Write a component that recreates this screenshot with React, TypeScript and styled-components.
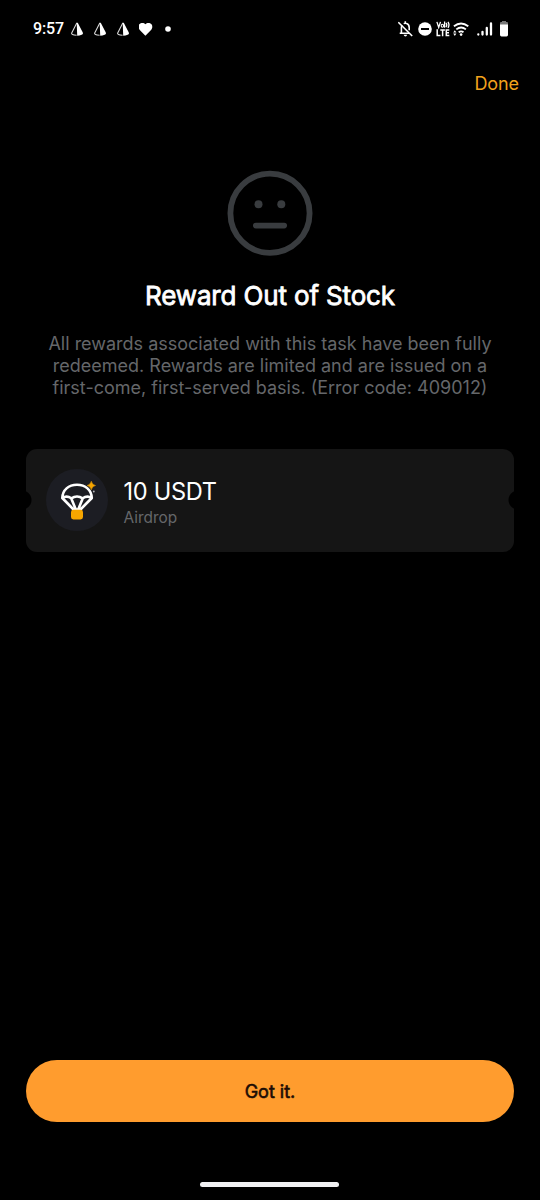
import React from "react";
import styled, { createGlobalStyle } from "styled-components";

const GlobalStyle = createGlobalStyle`
  *, *::before, *::after { box-sizing: border-box; }
  html, body { margin: 0; padding: 0; background: #000; }
  body { font-family: Inter, "Liberation Sans", sans-serif; }
  svg { display: block; flex: none; }
`;

const Screen = styled.div`
  width: 540px;
  height: 1200px;
  display: flex;
  flex-direction: column;
  background: #000;
  overflow: hidden;
`;

const StatusBar = styled.header`
  display: flex;
  align-items: center;
  justify-content: space-between;
  height: 58px;
  padding: 0 31px 0 33px;
  color: #fff;
`;

const StatusGroup = styled.div`
  display: flex;
  align-items: center;
`;

const Clock = styled.span`
  width: 37px;
  font: 500 16px/20px Roboto, sans-serif;
  letter-spacing: -0.1px;
  white-space: nowrap;
`;

const Nav = styled.nav`
  display: flex;
  justify-content: flex-end;
  height: 52px;
  padding: 14px 21px 0 0;
`;

const DoneButton = styled.button`
  height: 24px;
  padding: 0;
  border: 0;
  background: none;
  color: #f2a21c;
  font: 400 18px/24px Inter, sans-serif;
  letter-spacing: -0.1px;
`;

const Content = styled.main`
  flex: 1;
  display: flex;
  flex-direction: column;
  align-items: center;
  padding: 60px 26px 0;
`;

const Title = styled.h1`
  margin: 24px 0 0;
  color: #fff;
  font-size: 26px;
  font-weight: 400;
  line-height: 32px;
  letter-spacing: -0.15px;
  white-space: nowrap;
  -webkit-text-stroke: 0.8px #fff;
`;

const Message = styled.p`
  margin: 21px 0 0;
  color: #65676a;
  font-size: 18px;
  line-height: 22px;
  text-align: center;
  white-space: nowrap;
`;

const Ticket = styled.section`
  display: flex;
  align-items: center;
  width: 488px;
  height: 103px;
  margin-top: 50px;
  padding: 0 0 1px 20px;
  border-radius: 11px;
  background:
    radial-gradient(circle at -4px 51px, #000 9px, transparent 10px),
    radial-gradient(circle at 492px 51px, #000 9px, transparent 10px),
    #151515;
`;

const TokenBadge = styled.div`
  width: 62px;
  height: 62px;
  border-radius: 50%;
  background: #1c1d23;
`;

const TicketText = styled.div`
  display: flex;
  flex-direction: column;
  margin-left: 15.5px;
  padding-top: 4px;
`;

const Amount = styled.span`
  color: #fff;
  font-size: 23.6px;
  line-height: 30px;
  letter-spacing: -0.3px;
`;

const Kind = styled.span`
  color: #65676a;
  font-size: 15.4px;
  line-height: 21px;
`;

const Footer = styled.footer`
  display: flex;
  flex-direction: column;
  align-items: center;
  height: 140px;
`;

const PrimaryButton = styled.button`
  width: 488px;
  height: 62px;
  padding: 2px 0 0;
  border: 0;
  border-radius: 31px;
  background: #ff9c2e;
  color: #1c0d05;
  font: 400 18px/24px Inter, sans-serif;
  -webkit-text-stroke: 0.6px #1c0d05;
`;

const HomeIndicator = styled.div`
  width: 139px;
  height: 5px;
  margin: 60px 1px 0 0;
  border-radius: 3px;
  background: #f1f1f3;
`;

const PyramidIcon = () => (
  <svg width="23" height="16" viewBox="0 0 23 16">
    <path d="M6.800 2 1.700 12q-.8 1.700 4.900 2.300" fill="none" stroke="#d8d8d8" strokeWidth="1.100" />
    <path d="M6.700 1.400q.8-.1 1.300.9l4.800 9.200q.8 1.700-1.100 2.300-2.300.8-4.500.9z" fill="#fff" />
  </svg>
);

const HeartIcon = () => (
  <svg width="26" height="16" viewBox="1 0 26 16">
    <path d="M7.400 14.800 2 9.300C.2 7.400.1 4.800 1.300 3.300 3 1.400 6 1.600 7.400 3.300c1.400-1.700 4.400-1.900 6.100 0 1.200 1.500 1.100 4.100-.7 6z" fill="#fff" />
  </svg>
);

const DotIcon = () => (
  <svg width="6" height="6" viewBox="0 0 6 6">
    <circle cx="3" cy="3" r="2.800" fill="#fff" />
  </svg>
);

const BellOffIcon = () => (
  <svg width="20" height="18" viewBox="1 0 20 18" fill="none" stroke="#fff" strokeWidth="1.600">
    <path d="M1.300 2.200 15.200 16" />
    <path d="M4.400 13V7.700q0-1.400.8-2.400M2.700 13.200h9.300M6.700 3.600Q8.200 2.900 9.700 3.600q2.500 1 2.500 4v2.700M8.300 1.200v2" />
    <path d="M6.600 14.800h3.600q-.5 1.700-1.800 1.700t-1.800-1.700z" fill="#fff" stroke="none" />
  </svg>
);

const DoNotDisturbIcon = () => (
  <svg width="18" height="14" viewBox="0 0 18 14">
    <circle cx="7" cy="7" r="6.800" fill="#fff" />
    <path d="M3 7h8" stroke="#000" strokeWidth="2" />
  </svg>
);

const VolteIcon = () => (
  <svg width="17" height="16" viewBox="0 0 17 16" fill="none" stroke="#fff" strokeWidth="1.300">
    <path d="M.9.900 2.700 6.400 4.500.900M8.600.5v6.300M10.100 1.800q1.500 2 0 4.300M12 .8q2 3 0 6" />
    <ellipse cx="6.400" cy="4.800" rx="1.200" ry="1.500" strokeWidth="1.100" />
    <path d="M1.200 8.300v6.200h3.200M4.300 9h4.600M6.600 9v6.200M13.300 9h-3v5.500h3M10.300 11.700h2.700" strokeWidth="1.500" />
  </svg>
);

const WifiIcon = () => (
  <svg width="24" height="16" viewBox="0 0 24 16" fill="none" stroke="#fff" strokeWidth="1.800">
    <path d="M.9 5.300Q8-.3 15.300 5.300M3.300 8.400q4.800-3.800 9.600 0M5.700 11.300q2.400-1.900 4.800 0" />
    <circle cx="8.100" cy="13.600" r="1.300" fill="#fff" stroke="none" />
    <path d="m.2 11.500 1.600-2.300 1.600 2.300zM.2 12.600l1.600 2.300 1.600-2.300z" fill="#fff" stroke="none" />
  </svg>
);

const SignalIcon = () => (
  <svg width="22" height="14" viewBox="0 0 22 14" stroke="#fff" strokeWidth="2.300" strokeLinecap="round">
    <path d="M1.300 12.400v.1M5.500 9.800v2.700M9.800 6v6.500M14 1.400v11.100" />
  </svg>
);

const BatteryIcon = () => (
  <svg width="10" height="16" viewBox="0 0 10 16">
    <path d="M3 0h4v1h1q1 0 1 1.200V5H1V2.200Q1 1 2 1h1z" fill="#777" />
    <path d="M1 3.500h8v10.300Q9 15.500 7.500 15.500H2.500Q1 15.500 1 13.800z" fill="#fff" />
  </svg>
);

const NeutralFace = () => (
  <svg width="86" height="86" viewBox="0 0 86 86">
    <circle cx="43" cy="43.300" r="39.600" fill="none" stroke="#393c3f" strokeWidth="5.800" />
    <circle cx="31.500" cy="34.300" r="4" fill="#393c3f" />
    <circle cx="54.300" cy="34.300" r="4" fill="#393c3f" />
    <path d="M28.800 55.600h28.400" stroke="#393c3f" strokeWidth="5.600" strokeLinecap="round" />
  </svg>
);

const ParachuteIcon = () => (
  <svg width="62" height="62" viewBox="0 0 62 62" fill="none">
    <path
      d="M16.300 29C16.500 21 22.600 15.700 31 15.700S45.500 21 45.800 29L34.500 40.500h-7zM16.300 29q4.500-3 9 .3 5.700-3.700 11.400 0 4.500-3.300 9.100-.3M25.300 29.500l4.500 11M36.700 29.500l-4.500 11"
      stroke="#fff"
      strokeWidth="2.600"
      strokeLinejoin="round"
    />
    <rect x="25" y="40.800" width="12" height="9.600" rx="2.400" fill="#f7a600" />
    <path d="M45.300 12.200q.7 3.400 4.200 4.300-3.500.9-4.200 4.300-.7-3.400-4.200-4.300 3.500-.9 4.200-4.300z" fill="#f7a600" stroke="#f7a600" strokeWidth=".5" />
    <circle cx="47.800" cy="22.500" r=".9" fill="#b9babd" />
  </svg>
);

export default function App() {
  return (
    <Screen>
      <GlobalStyle />
      <StatusBar>
        <StatusGroup>
          <Clock>9:57</Clock>
          <PyramidIcon />
          <PyramidIcon />
          <PyramidIcon />
          <HeartIcon />
          <DotIcon />
        </StatusGroup>
        <StatusGroup>
          <BellOffIcon />
          <DoNotDisturbIcon />
          <VolteIcon />
          <WifiIcon />
          <SignalIcon />
          <BatteryIcon />
        </StatusGroup>
      </StatusBar>
      <Nav>
        <DoneButton>Done</DoneButton>
      </Nav>
      <Content>
        <NeutralFace />
        <Title>Reward Out of Stock</Title>
        <Message>
          All rewards associated with this task have been fully
          <br />
          redeemed. Rewards are limited and are issued on a
          <br />
          first-come, first-served basis. (Error code: 409012)
        </Message>
        <Ticket>
          <TokenBadge>
            <ParachuteIcon />
          </TokenBadge>
          <TicketText>
            <Amount>10 USDT</Amount>
            <Kind>Airdrop</Kind>
          </TicketText>
        </Ticket>
      </Content>
      <Footer>
        <PrimaryButton>Got it.</PrimaryButton>
        <HomeIndicator />
      </Footer>
    </Screen>
  );
}
